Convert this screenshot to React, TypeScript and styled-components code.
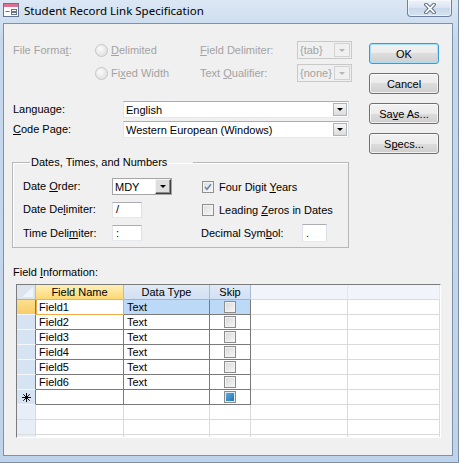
import styled, { createGlobalStyle } from 'styled-components'

const GlobalStyle = createGlobalStyle`
  html, body {
    margin: 0;
    padding: 0;
    background: #ffffff;
  }
  body {
    font-family: 'Liberation Sans', Arial, sans-serif;
    font-size: 11px;
    color: #000000;
  }
  * {
    box-sizing: border-box;
  }
`

const Window = styled.div`
  width: 459px;
  height: 463px;
  display: flex;
  flex-direction: column;
  background: linear-gradient(#dce7f4, #c6d8ed 40px, #bfd3ea);
  border-right: 1px solid #7b8faa;
  border-bottom: 1px solid #7b8faa;
`

const TitleBar = styled.div`
  height: 23px;
  flex-shrink: 0;
  display: flex;
  align-items: flex-start;
  padding: 0 6px 0 3px;
`

const TitleIcon = styled.svg`
  margin-top: 3px;
  flex-shrink: 0;
`

const TitleText = styled.div`
  margin-left: 5px;
  font-family: 'Noto Sans', 'Open Sans', sans-serif;
  font-size: 11.5px;
  font-weight: 400;
  line-height: 21px;
  color: #000;
`

const CloseButton = styled.div`
  margin-left: auto;
  width: 45px;
  height: 17px;
  display: flex;
  align-items: center;
  justify-content: center;
  border: 1px solid #6f829c;
  border-top: none;
  border-radius: 0 0 4px 4px;
  background: linear-gradient(#eef3fa, #d9e4f1 50%, #c8d7ea 50%, #d6e2f0);
  box-shadow: inset 0 0 0 1px rgba(255, 255, 255, 0.55);
`

const Body = styled.div`
  flex: 1;
  display: flex;
  padding: 0 5px 6px 3px;
`

const Client = styled.div`
  flex: 1;
  display: flex;
  flex-direction: column;
  border: 1px solid #7f91a8;
  background: #f0f0f0;
  padding: 17px 0 0 9px;
`

const TopArea = styled.div`
  display: flex;
  gap: 16px;
`

const LeftCol = styled.div`
  width: 340px;
  display: flex;
  flex-direction: column;
`

const ButtonCol = styled.div`
  width: 70px;
  margin-top: 2px;
  display: flex;
  flex-direction: column;
  gap: 9px;
`

const Button = styled.div<{ $default?: boolean }>`
  height: 21px;
  display: flex;
  align-items: center;
  justify-content: center;
  border: 1px solid ${p => (p.$default ? '#3c9ad6' : '#707070')};
  border-radius: 3px;
  background: linear-gradient(#f2f2f2, #ebebeb 50%, #dddddd 50%, #cfcfcf);
  box-shadow: inset 0 0 0 1px ${p => (p.$default ? '#a6e0fb' : 'rgba(255,255,255,0.7)')};
  color: #000;
`

const Key = styled.u`
  text-decoration-thickness: 1px;
  text-underline-offset: 1px;
`

const FormatGrid = styled.div`
  display: grid;
  grid-template-columns: 82px 105px 97px 55px;
  grid-auto-rows: 18px;
  row-gap: 5px;
  align-items: center;
`

const Label = styled.div<{ $disabled?: boolean }>`
  color: ${p => (p.$disabled ? '#a3a3a3' : '#000')};
  white-space: nowrap;
  line-height: 13px;
`

const RadioItem = styled.div`
  display: flex;
  align-items: center;
  gap: 3px;
  color: #a3a3a3;
`

const Radio = styled.span`
  width: 13px;
  height: 13px;
  border-radius: 50%;
  border: 1px solid #c6c6c6;
  background: radial-gradient(circle at 40% 35%, #fbfbfb, #e3e3e3 70%);
`

const DisabledCombo = styled.div`
  height: 18px;
  display: flex;
  border: 1px solid #c9c9c9;
  color: #a3a3a3;
  padding-left: 2px;
  align-items: center;
`

const DisabledDrop = styled.div`
  margin-left: auto;
  width: 16px;
  height: 14px;
  margin-right: 1px;
  border: 1px solid #d2d2d2;
  display: flex;
  align-items: center;
  justify-content: center;
`

const Arrow = styled.span<{ $color?: string }>`
  width: 0;
  height: 0;
  border-left: 3px solid transparent;
  border-right: 3px solid transparent;
  border-top: 3px solid ${p => p.$color || '#000'};
`

const LangGrid = styled.div`
  margin-top: 19px;
  display: grid;
  grid-template-columns: 110px 226px;
  grid-auto-rows: 17px;
  row-gap: 3px;
  align-items: center;
`

const Combo = styled.div`
  height: 17px;
  display: flex;
  align-items: center;
  background: #fff;
  border: 1px solid #abadb3;
  border-color: #abadb3 #dbdfe6 #e3e9ef #e2e3ea;
  padding-left: 2px;
`

const ComboDrop = styled.div`
  margin-left: auto;
  margin-right: 1px;
  width: 14px;
  height: 13px;
  border: 1px solid #b3b3b3;
  background: linear-gradient(#f6f6f6, #dcdcdc);
  display: flex;
  align-items: center;
  justify-content: center;
`

const Group = styled.fieldset`
  margin: 18px 0 0 -1px;
  width: 337px;
  min-width: 0;
  padding: 9px 0 5px 10px;
  border: 1px solid #b7b7b7;
  box-shadow: inset 1px 1px 0 #fff;
`

const Legend = styled.legend`
  margin-left: 7px;
  padding: 0 26px 0 1px;
  line-height: 13px;
  font-size: 11px;
`

const GroupGrid = styled.div`
  display: grid;
  grid-template-columns: 89px 90px 1fr;
  grid-template-rows: 17px 17px 18px;
  row-gap: 6px;
  align-items: center;
`

const OldCombo = styled.div`
  width: 60px;
  height: 17px;
  display: flex;
  align-items: center;
  background: #fff;
  border: 1px solid #a5a5a5;
  padding-left: 2px;
`

const OldDrop = styled.div`
  margin-left: auto;
  width: 16px;
  height: 15px;
  background: #dedede;
  border-style: solid;
  border-width: 1px;
  border-color: #f4f4f4 #404040 #404040 #f4f4f4;
  box-shadow: inset -1px -1px 0 #8a8a8a;
  display: flex;
  align-items: center;
  justify-content: center;
`

const TextBox = styled.div<{ $w: number; $h?: number }>`
  width: ${p => p.$w}px;
  height: ${p => p.$h || 16}px;
  background: #fff;
  border: 1px solid #abadb3;
  border-color: #abadb3 #dbdfe6 #e3e9ef #e2e3ea;
  padding-left: 3px;
  line-height: 13px;
  display: flex;
  align-items: center;
`

const CheckItem = styled.div`
  display: flex;
  align-items: center;
  gap: 5px;
`

const CheckBox = styled.span`
  width: 12px;
  height: 12px;
  border: 1px solid #8f8f8f;
  background: linear-gradient(135deg, #dcdcdc, #f8f8f8);
  box-shadow: inset 0 0 0 1px #f4f4f4;
  display: flex;
  align-items: center;
  justify-content: center;
`

const DecimalRow = styled.div`
  margin-left: -1px;
  width: 126px;
  display: flex;
  align-items: center;
  justify-content: space-between;
`

const FieldInfo = styled.div`
  margin-top: 18px;
  line-height: 13px;
`

const TableFrame = styled.div`
  margin: 5px 0 0 3px;
  width: 425px;
  height: 154px;
  overflow: hidden;
  border-style: solid;
  border-width: 1px;
  border-color: #7c7c7c #ffffff #ffffff #7c7c7c;
  background: #fff;
`

const Grid = styled.table`
  border-collapse: separate;
  border-spacing: 0;
  table-layout: fixed;
  width: 423px;
`

const Col = styled.col<{ $w: number }>`
  width: ${p => p.$w}px;
`

const headBg = {
  corner: '#dbe4ef',
  active: 'linear-gradient(#fff0b8, #fcd873)',
  normal: 'linear-gradient(#e0eaf7, #d1e0f3)',
  blank: '#f1f5fb',
}

const HeadCell = styled.th<{ $kind: keyof typeof headBg }>`
  height: 15px;
  padding: 0;
  font-weight: normal;
  font-size: 11px;
  line-height: 13px;
  text-align: center;
  position: relative;
  background: ${p => headBg[p.$kind]};
  border-right: 1px solid ${p => (p.$kind === 'blank' ? '#e1e7ef' : '#a9bdd6')};
  border-bottom: 1px solid
    ${p => (p.$kind === 'active' ? '#f2b04f' : p.$kind === 'blank' ? '#dcdcdc' : '#9fb4cf')};
`

const CornerMark = styled.span`
  position: absolute;
  right: 2px;
  bottom: 2px;
  width: 11px;
  height: 10px;
  background: #f1f4f8;
  clip-path: polygon(100% 0, 100% 100%, 0 100%);
`

const selBg = {
  current: 'linear-gradient(#fde08e, #f8cc66)',
  data: '#d6e3f3',
  new: '#d6e3f3',
  empty: '#e8eef7',
}

const Selector = styled.td<{ $state: keyof typeof selBg }>`
  height: 15px;
  padding: 0;
  background: ${p => selBg[p.$state]};
  border-right: 1px solid ${p => (p.$state === 'empty' ? '#dadada' : '#7a7a7a')};
  border-bottom: 1px solid ${p => (p.$state === 'empty' ? '#dcdcdc' : '#f3f6fa')};
  text-align: center;
  vertical-align: middle;
`

const Cell = styled.td<{ $dark?: boolean; $hl?: boolean; $active?: boolean; $center?: boolean }>`
  height: 15px;
  padding: 0 0 0 3px;
  line-height: 13px;
  white-space: nowrap;
  overflow: hidden;
  background: ${p => (p.$hl ? '#bcdaf7' : '#fff')};
  border-right: 1px solid ${p => (p.$active ? '#f2aa47' : p.$dark ? '#7a7a7a' : '#dadada')};
  border-bottom: 1px solid ${p => (p.$active ? '#f2aa47' : p.$dark ? '#7a7a7a' : '#dadada')};
  box-shadow: ${p => (p.$active ? 'inset 1px 0 0 #f2aa47' : 'none')};
  text-align: ${p => (p.$center ? 'center' : 'left')};
  vertical-align: middle;
  ${p => (p.$center ? 'padding: 0;' : '')}
`

const SkipBox = styled.span<{ $blue?: boolean }>`
  display: inline-block;
  vertical-align: middle;
  width: 12px;
  height: 12px;
  margin-top: -1px;
  border: 1px solid #8c8c8c;
  background: ${p =>
    p.$blue ? 'linear-gradient(135deg, #63b0e4, #1e6ea6)' : 'linear-gradient(135deg, #d8d8d8, #f7f7f7)'};
  box-shadow: inset 0 0 0 1px ${p => (p.$blue ? '#d9ecf8' : '#f2f2f2')};
`

const fields = ['Field1', 'Field2', 'Field3', 'Field4', 'Field5', 'Field6']
const colWidths = [19, 88, 86, 41, 97, 92]

function DropArrow({ color }: { color?: string }) {
  return <Arrow $color={color} />
}

function NewRowMark() {
  return (
    <svg width="9" height="9" viewBox="0 0 9 9" style={{ display: 'block', margin: '0 auto' }}>
      <g stroke="#000" strokeWidth="1">
        <line x1="4.5" y1="0" x2="4.5" y2="9" />
        <line x1="0" y1="4.5" x2="9" y2="4.5" />
        <line x1="1.3" y1="1.3" x2="7.7" y2="7.7" />
        <line x1="7.7" y1="1.3" x2="1.3" y2="7.7" />
      </g>
    </svg>
  )
}

function DataTable() {
  return (
    <TableFrame>
      <Grid>
        <colgroup>
          {colWidths.map((w, i) => (
            <Col key={i} $w={w} />
          ))}
        </colgroup>
        <thead>
          <tr>
            <HeadCell $kind="corner">
              <CornerMark />
            </HeadCell>
            <HeadCell $kind="active">Field Name</HeadCell>
            <HeadCell $kind="normal">Data Type</HeadCell>
            <HeadCell $kind="normal">Skip</HeadCell>
            <HeadCell $kind="blank" />
            <HeadCell $kind="blank" />
          </tr>
        </thead>
        <tbody>
          {fields.map((f, i) => (
            <tr key={f}>
              <Selector $state={i === 0 ? 'current' : 'data'} />
              <Cell $dark $active={i === 0}>
                {f}
              </Cell>
              <Cell $dark $hl={i === 0}>
                Text
              </Cell>
              <Cell $dark $hl={i === 0} $center>
                <SkipBox />
              </Cell>
              <Cell />
              <Cell />
            </tr>
          ))}
          <tr>
            <Selector $state="new">
              <NewRowMark />
            </Selector>
            <Cell $dark />
            <Cell $dark />
            <Cell $dark $center>
              <SkipBox $blue />
            </Cell>
            <Cell />
            <Cell />
          </tr>
          {[0, 1, 2].map(r => (
            <tr key={r}>
              <Selector $state="empty" />
              <Cell />
              <Cell />
              <Cell />
              <Cell />
              <Cell />
            </tr>
          ))}
        </tbody>
      </Grid>
    </TableFrame>
  )
}

export default function App() {
  return (
    <>
      <GlobalStyle />
      <Window>
        <TitleBar>
          <TitleIcon width="16" height="14" viewBox="0 0 16 14">
            <rect x="0.5" y="0.5" width="15" height="13" fill="#fdfdfd" stroke="#66758e" />
            <rect x="1" y="1" width="14" height="3" fill="#e0708f" />
            <line x1="2.5" y1="8.5" x2="6.5" y2="8.5" stroke="#66758e" />
            <rect x="8.5" y="6.5" width="5" height="2" fill="none" stroke="#66758e" />
            <rect x="8.5" y="9.5" width="5" height="2" fill="none" stroke="#66758e" />
          </TitleIcon>
          <TitleText>Student Record Link Specification</TitleText>
          <CloseButton>
            <svg width="12" height="11" viewBox="0 0 12 11">
              <path d="M2 1.5 L10 9.5 M10 1.5 L2 9.5" stroke="#44546a" strokeWidth="3.6" strokeLinecap="round" />
              <path d="M2 1.5 L10 9.5 M10 1.5 L2 9.5" stroke="#ffffff" strokeWidth="1.8" strokeLinecap="round" />
            </svg>
          </CloseButton>
        </TitleBar>
        <Body>
          <Client>
            <TopArea>
              <LeftCol>
                <FormatGrid>
                  <Label $disabled>
                    File Forma<Key>t</Key>:
                  </Label>
                  <RadioItem>
                    <Radio />
                    <span>
                      <Key>D</Key>elimited
                    </span>
                  </RadioItem>
                  <Label $disabled>
                    <Key>F</Key>ield Delimiter:
                  </Label>
                  <DisabledCombo>
                    {'{tab}'}
                    <DisabledDrop>
                      <DropArrow color="#b5b5b5" />
                    </DisabledDrop>
                  </DisabledCombo>
                  <span />
                  <RadioItem>
                    <Radio />
                    <span>
                      Fi<Key>x</Key>ed Width
                    </span>
                  </RadioItem>
                  <Label $disabled>
                    Text <Key>Q</Key>ualifier:
                  </Label>
                  <DisabledCombo>
                    {'{none}'}
                    <DisabledDrop>
                      <DropArrow color="#b5b5b5" />
                    </DisabledDrop>
                  </DisabledCombo>
                </FormatGrid>

                <LangGrid>
                  <Label>Language:</Label>
                  <Combo>
                    English
                    <ComboDrop>
                      <DropArrow />
                    </ComboDrop>
                  </Combo>
                  <Label>
                    <Key>C</Key>ode Page:
                  </Label>
                  <Combo>
                    Western European (Windows)
                    <ComboDrop>
                      <DropArrow />
                    </ComboDrop>
                  </Combo>
                </LangGrid>

                <Group>
                  <Legend>Dates, Times, and Numbers</Legend>
                  <GroupGrid>
                    <Label>
                      Date <Key>O</Key>rder:
                    </Label>
                    <OldCombo>
                      MDY
                      <OldDrop>
                        <DropArrow />
                      </OldDrop>
                    </OldCombo>
                    <CheckItem>
                      <CheckBox>
                        <svg width="8" height="8" viewBox="0 0 8 8">
                          <path d="M1 4 L3 6.2 L7 1.2" fill="none" stroke="#6f87a8" strokeWidth="1.6" />
                        </svg>
                      </CheckBox>
                      <span>
                        Four Digit <Key>Y</Key>ears
                      </span>
                    </CheckItem>

                    <Label>
                      Date De<Key>l</Key>imiter:
                    </Label>
                    <TextBox $w={30}>/</TextBox>
                    <CheckItem>
                      <CheckBox />
                      <span>
                        Leading <Key>Z</Key>eros in Dates
                      </span>
                    </CheckItem>

                    <Label>
                      Time Deli<Key>m</Key>iter:
                    </Label>
                    <TextBox $w={30}>:</TextBox>
                    <DecimalRow>
                      <Label>
                        Decimal Sym<Key>b</Key>ol:
                      </Label>
                      <TextBox $w={25} $h={18}>
                        .
                      </TextBox>
                    </DecimalRow>
                  </GroupGrid>
                </Group>
              </LeftCol>

              <ButtonCol>
                <Button $default>OK</Button>
                <Button>Cancel</Button>
                <Button>
                  Sa<Key>v</Key>e As...
                </Button>
                <Button>
                  S<Key>p</Key>ecs...
                </Button>
              </ButtonCol>
            </TopArea>

            <FieldInfo>
              Field <Key>I</Key>nformation:
            </FieldInfo>
            <DataTable />
          </Client>
        </Body>
      </Window>
    </>
  )
}
